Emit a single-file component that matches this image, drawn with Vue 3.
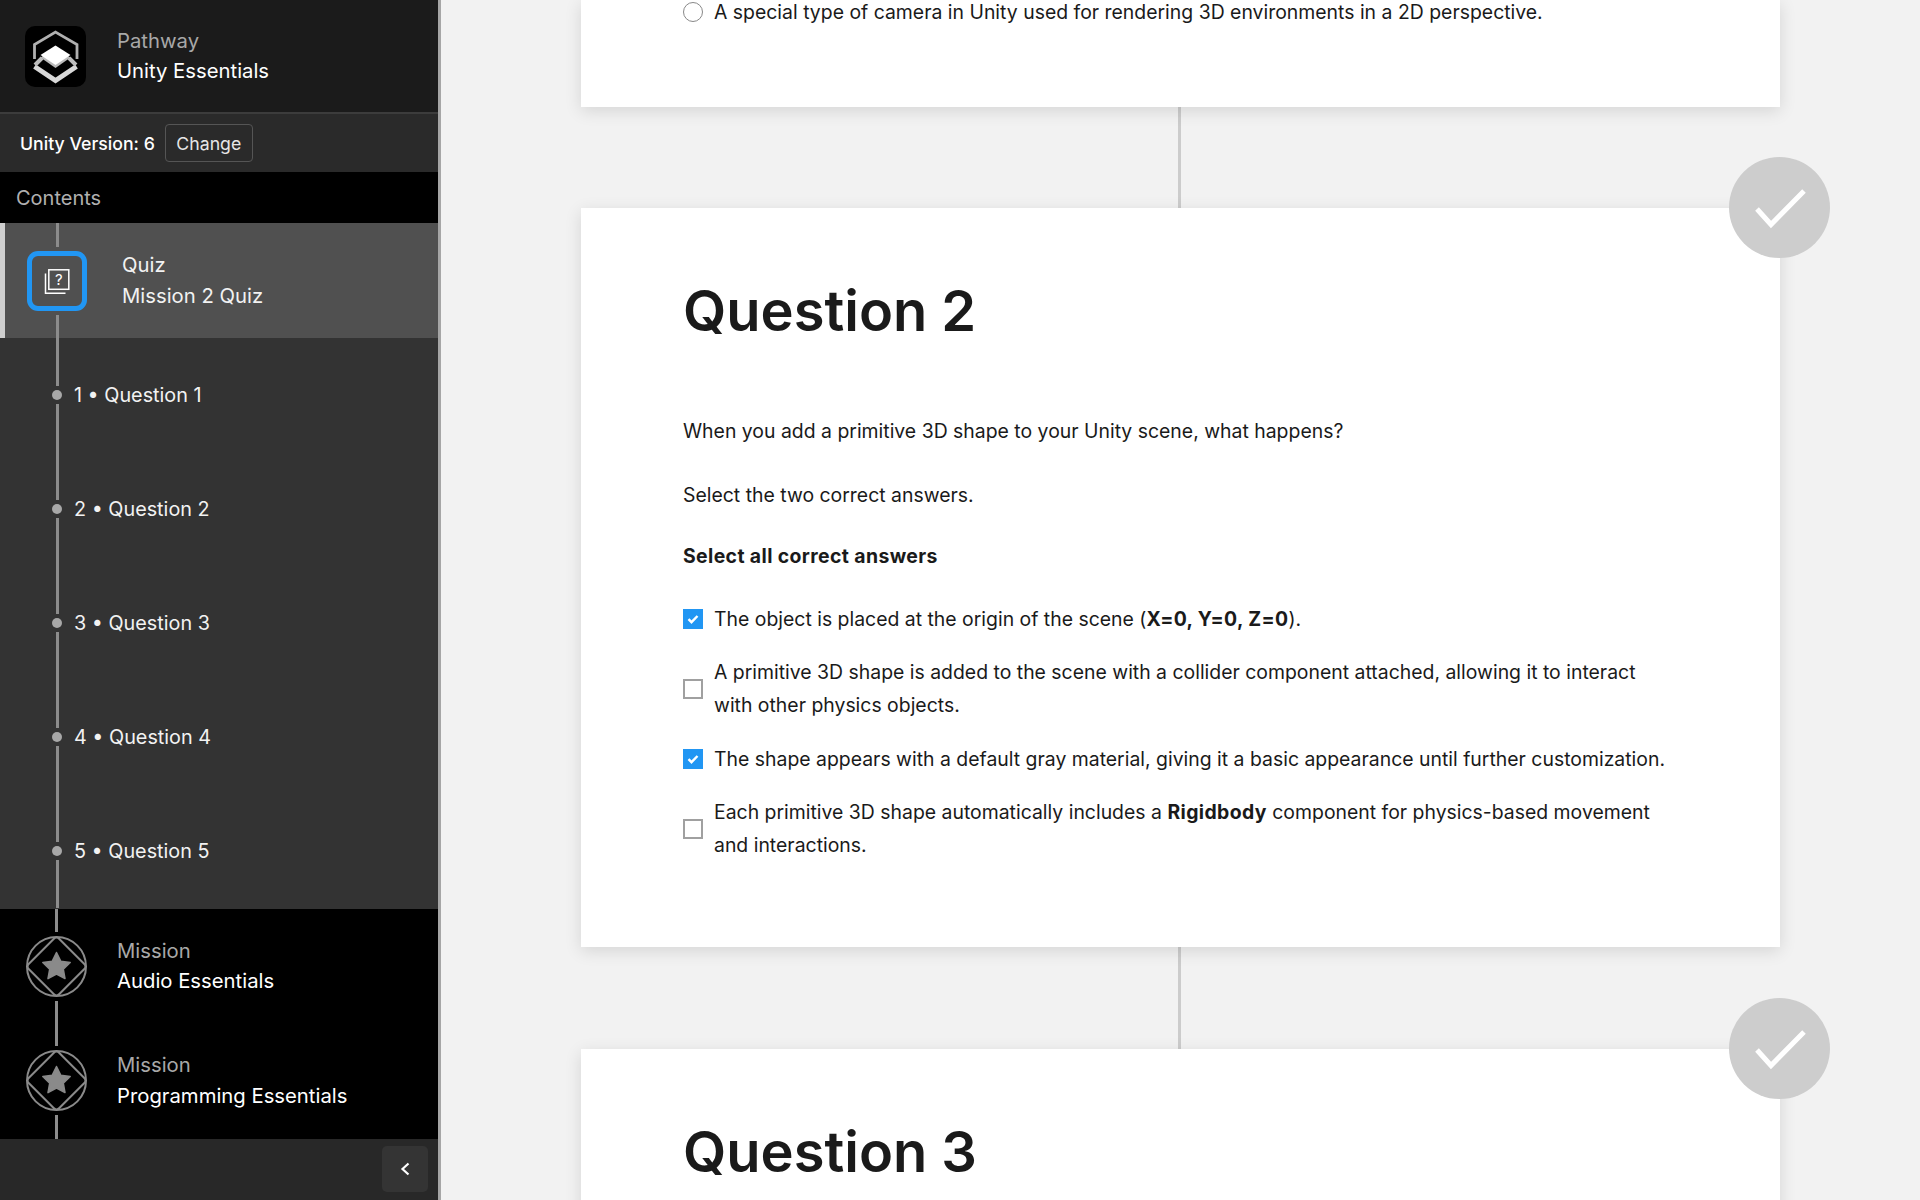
<template>
  <div class="page">
    <aside class="sidebar">
      <header class="path-head">
        <div class="logo">
          <svg viewBox="0 0 61 61" width="61" height="61">
            <path d="M9.500 33V18.500L30.500 6l21.500 12.500V33" fill="none" stroke="#b0b0b0" stroke-width="2.800" />
            <path d="M9.500 40.500l21 14 21-14" fill="none" stroke="#d8d8d8" stroke-width="4.800" />
            <path d="M17 32l-7 7M44 32l7 7" fill="none" stroke="#bdbdbd" stroke-width="4" />
            <path d="M30.500 22L45.500 31.500 30.500 42 15.500 31.500z" fill="#bbb" />
            <path d="M30.500 19.500L45.500 29 30.500 39 15.500 29z" fill="#fff" />
          </svg>
        </div>
        <div class="two-line">
          <span class="sub">Pathway</span>
          <span>Unity Essentials</span>
        </div>
      </header>
      <div class="version">
        <span>Unity Version: 6</span>
        <button class="change">Change</button>
      </div>
      <div class="contents">Contents</div>
      <div class="toc">
        <div class="row active">
          <div class="rail">
            <i class="seg"></i>
            <div class="quiz-icon">
              <svg viewBox="0 0 30 30" width="30" height="30">
                <rect x="6.800" y="3.800" width="20" height="19.500" fill="none" stroke="#fff" stroke-width="1.500" />
                <path d="M3.500 7.500v19.800h20" fill="none" stroke="#fff" stroke-width="1.500" />
                <text x="16.800" y="18.500" text-anchor="middle" class="q-mark">?</text>
              </svg>
            </div>
            <i class="seg"></i>
          </div>
          <div class="two-line plain">
            <span>Quiz</span>
            <span>Mission 2 Quiz</span>
          </div>
        </div>
        <div v-for="q in questions" :key="q" class="row question">
          <div class="rail">
            <i class="seg"></i>
            <i class="dot"></i>
            <i class="seg"></i>
          </div>
          <span class="q-label">{{ q }} • Question {{ q }}</span>
        </div>
        <div class="missions">
          <div v-for="m in missions" :key="m" class="row mission">
            <div class="rail">
              <i class="seg"></i>
              <svg class="star-badge" viewBox="0 0 61 61" width="61" height="61">
                <circle cx="30.500" cy="30.500" r="29.500" fill="none" stroke="#8a8a8a" stroke-width="2" />
                <rect x="9" y="9" width="43" height="43" rx="4" transform="rotate(45 30.500 30.500)" fill="none" stroke="#8a8a8a" stroke-width="2" />
                <path d="M30.500 16.500l4.200 8.700 9.500 1.300-6.900 6.600 1.700 9.500-8.500-4.600-8.500 4.600 1.700-9.500-6.900-6.600 9.500-1.300z" fill="#8a8a8a" stroke="#8a8a8a" stroke-width="1.500" stroke-linejoin="round" />
              </svg>
              <i class="seg"></i>
            </div>
            <div class="two-line">
              <span class="sub">Mission</span>
              <span>{{ m }}</span>
            </div>
          </div>
        </div>
      </div>
      <footer class="side-foot">
        <button class="collapse" aria-label="Collapse">
          <svg viewBox="0 0 12 16" width="12" height="16">
            <path d="M9.500 2.500L3.500 8l6 5.500" fill="none" stroke="#fff" stroke-width="2.200" />
          </svg>
        </button>
      </footer>
    </aside>

    <main class="main">
      <section class="card first">
        <label class="radio-row">
          <span class="radio"></span>
          <span>A special type of camera in Unity used for rendering 3D environments in a 2D perspective.</span>
        </label>
      </section>
      <i class="link"></i>
      <section class="card">
        <span class="done">
          <svg viewBox="0 0 101 101" width="101" height="101">
            <path d="M28 52l14 15.500L75 34" fill="none" stroke="#fff" stroke-width="5" />
          </svg>
        </span>
        <h2>Question 2</h2>
        <p>When you add a primitive 3D shape to your Unity scene, what happens?</p>
        <p>Select the two correct answers.</p>
        <p><strong>Select all correct answers</strong></p>
        <div class="options">
          <div class="option">
            <span class="box on"><svg viewBox="0 0 20 20" width="20" height="20"><path d="M5.500 10.200l3 3 6-6.200" fill="none" stroke="#fff" stroke-width="2.400" /></svg></span>
            <span>The object is placed at the origin of the scene (<strong>X=0, Y=0, Z=0</strong>).</span>
          </div>
          <div class="option">
            <span class="box"></span>
            <span>A primitive 3D shape is added to the scene with a collider component attached, allowing it to interact with other physics objects.</span>
          </div>
          <div class="option">
            <span class="box on"><svg viewBox="0 0 20 20" width="20" height="20"><path d="M5.500 10.200l3 3 6-6.200" fill="none" stroke="#fff" stroke-width="2.400" /></svg></span>
            <span>The shape appears with a default gray material, giving it a basic appearance until further customization.</span>
          </div>
          <div class="option">
            <span class="box"></span>
            <span>Each primitive 3D shape automatically includes a <strong>Rigidbody</strong> component for physics-based movement and interactions.</span>
          </div>
        </div>
      </section>
      <i class="link"></i>
      <section class="card">
        <span class="done">
          <svg viewBox="0 0 101 101" width="101" height="101">
            <path d="M28 52l14 15.500L75 34" fill="none" stroke="#fff" stroke-width="5" />
          </svg>
        </span>
        <h2>Question 3</h2>
      </section>
    </main>
  </div>
</template>

<script setup>
const questions = [1, 2, 3, 4, 5]
const missions = ['Audio Essentials', 'Programming Essentials']
</script>

<style>
html, body {
  margin: 0;
  background: #f2f2f2;
}
</style>

<style scoped>
.page {
  display: flex;
  height: 1200px;
  overflow: hidden;
  font-family: Inter, "Liberation Sans", sans-serif;
  font-size: 19.42px;
  color: #1a1a1a;
}

.sidebar {
  width: 438px;
  flex: none;
  display: flex;
  flex-direction: column;
  border-right: 3px solid #a6a6a6;
  color: #fff;
  background: #000;
  font-size: 20px;
}

.path-head {
  display: flex;
  align-items: center;
  gap: 31px;
  height: 112px;
  padding-left: 25px;
  background: #1b1b1b;
  border-bottom: 2px solid #3c3c3c;
}

.logo {
  width: 61px;
  height: 61px;
  border-radius: 10px;
  background: #000;
}

.logo svg {
  display: block;
  filter: blur(0.5px);
}

.two-line {
  display: flex;
  flex-direction: column;
  font-size: 20.3px;
  line-height: 30.500px;
}

.sub {
  color: #a8a8a8;
}

.version {
  display: flex;
  align-items: center;
  gap: 10px;
  height: 58px;
  padding-left: 20px;
  font-size: 17.7px;
  font-weight: 500;
  background: #2a2a2a;
}

.change {
  width: 88px;
  height: 38px;
  padding: 0;
  font: 400 17.7px Inter, "Liberation Sans", sans-serif;
  color: #e6e6e6;
  background: transparent;
  border: 1px solid #555;
  border-radius: 4px;
}

.contents {
  display: flex;
  align-items: center;
  height: 51px;
  padding-left: 16px;
  color: #b0b0b0;
}

.toc {
  display: flex;
  flex-direction: column;
  background: #333;
}

.row {
  display: flex;
  align-items: center;
  height: 114px;
}

.rail {
  display: flex;
  flex-direction: column;
  align-items: center;
  width: 60px;
  height: 100%;
  margin-left: 27px;
}

.seg {
  flex: 1;
  width: 3px;
  background: #8c8c8c;
}

.active {
  height: 115px;
  background: #505050;
  border-left: 5px solid #cfcfcf;
  box-sizing: border-box;
}

.active .rail {
  margin-left: 22px;
}

.active .two-line {
  margin-left: 35px;
}

.plain span {
  color: #f2f2f2;
}

.quiz-icon {
  display: flex;
  align-items: center;
  justify-content: center;
  box-sizing: border-box;
  width: 60px;
  height: 60px;
  margin: 4px 0;
  border: 5px solid #2196f3;
  border-radius: 11px;
}

.q-mark {
  font: 400 15px Inter, sans-serif;
  fill: #fff;
}

.dot {
  flex: none;
  width: 10px;
  height: 10px;
  margin: 4px 0;
  border-radius: 50%;
  background: #a8a8a8;
}

.q-label {
  margin-left: -13px;
  font-size: 19.8px;
  color: #f2f2f2;
}

.missions {
  margin-top: 1px;
  background: #000;
}

.mission .rail {
  margin-left: 26px;
}

.mission .two-line {
  margin-left: 31px;
}

.mission:last-child {
  height: 115.5px;
}

.star-badge {
  flex: none;
  margin: 4px 0;
}

.side-foot {
  flex: 1;
  display: flex;
  align-items: center;
  justify-content: flex-end;
  padding-right: 10px;
  background: #282828;
}

.collapse {
  display: flex;
  align-items: center;
  justify-content: center;
  width: 46px;
  height: 46px;
  padding: 0;
  background: #343434;
  border: 0;
  border-radius: 5px;
}

.main {
  flex: 1;
  display: flex;
  flex-direction: column;
  align-items: center;
  background: #f2f2f2;
}

.card {
  position: relative;
  flex: none;
  box-sizing: border-box;
  width: 1199px;
  padding: 0 102px 85px;
  line-height: 33px;
  background: #fff;
  box-shadow: 0 4px 16px rgba(0, 0, 0, 0.12);
}

.first {
  height: 106.5px;
  padding-bottom: 0;
}

.radio-row {
  display: flex;
  align-items: center;
  gap: 11px;
  height: 24px;
}

.radio {
  flex: none;
  box-sizing: border-box;
  width: 20px;
  height: 20px;
  border: 1.500px solid #888;
  border-radius: 50%;
}

.link {
  flex: none;
  width: 3px;
  height: 102px;
  margin-left: -2px;
  background: #cccccc;
}

.first + .link {
  height: 101.5px;
}

.done {
  position: absolute;
  top: -51px;
  right: -50px;
  width: 101px;
  height: 101px;
  border-radius: 50%;
  background: #cdcdcd;
}

.done svg {
  display: block;
}

h2 {
  margin: 0;
  padding: 69px 0 69.500px;
  font-size: 56px;
  font-weight: 600;
  line-height: 68px;
}

p {
  margin: 0 0 30px;
}

p:nth-of-type(1) {
  margin-bottom: 31px;
}

p:nth-of-type(2) {
  margin-bottom: 28px;
}

strong {
  font-weight: 700;
  letter-spacing: 0.38px;
}

.options {
  display: flex;
  flex-direction: column;
  gap: 20.500px;
}

.option {
  display: flex;
  align-items: center;
  gap: 11px;
}

.box {
  flex: none;
  box-sizing: border-box;
  width: 20px;
  height: 20px;
  background: #fff;
  border: 2px solid #a0a0a0;
}

.box.on {
  background: #2196f3;
  border: 0;
}

.box svg {
  display: block;
}
</style>
